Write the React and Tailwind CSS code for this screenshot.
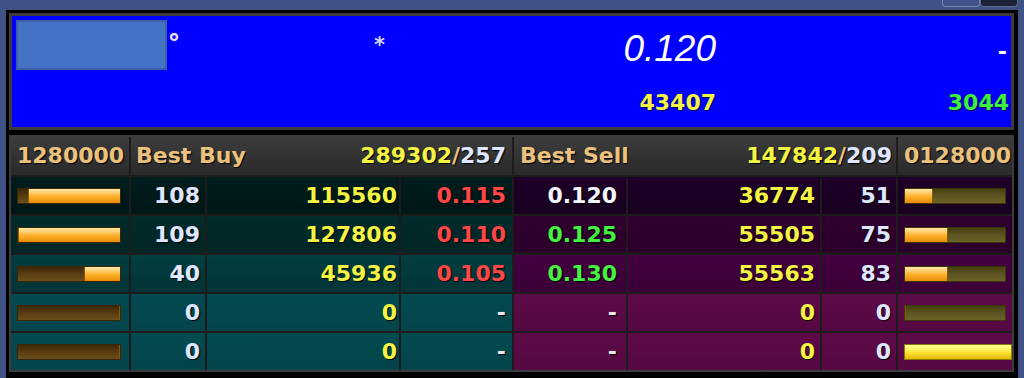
const buyRows = [
  { bar: 90, count: 108, qty: 115560, price: "0.115" },
  { bar: 100, count: 109, qty: 127806, price: "0.110" },
  { bar: 35, count: 40, qty: 45936, price: "0.105" },
  { bar: 0, count: 0, qty: 0, price: "-" },
  { bar: 0, count: 0, qty: 0, price: "-" },
]

const sellRows = [
  { price: "0.120", priceClass: "text-[#f4f6ff]", qty: 36774, count: 51, bar: 28 },
  { price: "0.125", priceClass: "text-[#44f044]", qty: 55505, count: 75, bar: 43 },
  { price: "0.130", priceClass: "text-[#44f044]", qty: 55563, count: 83, bar: 43 },
  { price: "-", priceClass: "text-[#e8e8f0]", qty: 0, count: 0, bar: 0 },
  { price: "-", priceClass: "text-[#e8e8f0]", qty: 0, count: 0, bar: 0, full: true },
]

const buyBg = [
  "bg-linear-to-b from-[#011d1d] to-[#011616]",
  "bg-linear-to-b from-[#032c2c] to-[#022525]",
  "bg-linear-to-b from-[#033e41] to-[#023437]",
  "bg-linear-to-b from-[#044b51] to-[#03444a]",
  "bg-linear-to-b from-[#044b51] to-[#03444a]",
]

const sellBg = [
  "bg-linear-to-b from-[#1f0028] to-[#180020]",
  "bg-linear-to-b from-[#31002f] to-[#2a0029]",
  "bg-linear-to-b from-[#43003f] to-[#3b0038]",
  "bg-linear-to-b from-[#5d0b48] to-[#560842]",
  "bg-linear-to-b from-[#5d0b48] to-[#560842]",
]

const shadow = "[text-shadow:1px_1px_1px_#000]"

const BuyBar = ({ pct }) => (
  <div className="w-[104px] h-[16px] flex justify-end border border-[#3a2505] bg-linear-to-b from-[#3d2806] via-[#5a3c12] to-[#6b4e1c]">
    <div
      className="h-full bg-linear-to-b from-[#ffe9a8] via-[#ffb52e] to-[#e98a00] border-l border-[#8a5a00]"
      style={{ width: `${pct}%` }}
    />
  </div>
)

const SellBar = ({ pct, full }) => {
  if (full) {
    return (
      <div className="flex-1 h-[16px] border border-[#8a7a00] bg-linear-to-b from-[#ffff9c] via-[#ffe633] to-[#e6b800]" />
    )
  }
  return (
    <div className="w-[102px] h-[16px] flex border border-[#3a3608] bg-linear-to-b from-[#45400f] via-[#5c5421] to-[#6b6228]">
      <div
        className="h-full bg-linear-to-b from-[#ffe9a8] via-[#ffb52e] to-[#e98a00] border-r border-[#8a5a00]"
        style={{ width: `${pct}%` }}
      />
    </div>
  )
}

const App = () => {
  return (
    <div className="w-[1024px] h-[378px] overflow-hidden bg-[#3f5185] flex flex-col font-['DejaVu_Sans',sans-serif] font-bold text-[22px] leading-none">
      {/* window tabs */}
      <div className="h-[10px] flex justify-end pr-[6px]">
        <div className="w-[38px] h-[7px] border border-t-0 border-[#7888b0] rounded-b-[4px]" />
        <div className="w-[38px] h-[7px] bg-[#1c2236] border border-t-0 border-[#5a6a94] rounded-b-[4px]" />
      </div>

      <div className="mx-[6px] flex-1 bg-black pl-[3px] pr-[4px] pt-[3px] flex flex-col gap-[5px]">
        {/* quote panel */}
        <div className="h-[117px] border-[3px] border-[#3c3c3c] bg-[#0000fe] grid grid-cols-[360px_344px_1fr] grid-rows-[72px_1fr]">
          <div className="flex items-start pl-[4px] pt-[4px]">
            <div className="w-[151px] h-[50px] bg-[#4472c4] border-2 border-[#3b5fa6]" />
            <span className="ml-[1px] mt-[12px] text-[24px] text-[#e4e0ff] [text-shadow:0_0_1px_#c080ff]">°</span>
          </div>
          <div className="flex justify-between items-start">
            <span className="pl-[2px] pt-[19px] text-[21px] text-[#d4d4ff]">*</span>
            <span className="pt-[14px] font-['Liberation_Sans',sans-serif] font-normal italic text-[37px] text-white">
              0.120
            </span>
          </div>
          <div className="flex justify-end items-start pr-[4px] pt-[25px]">
            <span className="text-white">-</span>
          </div>
          <div />
          <div className="flex justify-end items-start pt-[4px]">
            <span className="text-[#f4f444] [text-shadow:1px_1px_1px_#000060]">43407</span>
          </div>
          <div className="flex justify-end items-start pt-[4px] pr-[2px]">
            <span className="text-[#3cf03c] [text-shadow:1px_1px_1px_#000060]">3044</span>
          </div>
        </div>

        {/* depth table */}
        <div className="border-2 border-[#3c3c3c] bg-[#1c1c1c] grid grid-cols-[118px_74px_192px_111px_112px_192px_74px_114px] auto-rows-[37px] grid-rows-[38px] gap-[2px]">
          <div className={`flex items-center pl-[6px] bg-linear-to-b from-[#3c3c3c] to-[#2a2a2a] text-[#eac27e] ${shadow}`}>
            1280000
          </div>
          <div className={`col-span-3 flex items-center justify-between pl-[5px] pr-[6px] bg-linear-to-b from-[#3c3c3c] to-[#2a2a2a] ${shadow}`}>
            <span className="text-[#eac27e]">Best Buy</span>
            <span>
              <span className="text-[#f4f444]">289302</span>
              <span className="text-[#eac27e]">/</span>
              <span className="text-[#dfe6ff]">257</span>
            </span>
          </div>
          <div className={`col-span-3 flex items-center justify-between pl-[6px] pr-[4px] bg-linear-to-b from-[#3c3c3c] to-[#2a2a2a] ${shadow}`}>
            <span className="text-[#eac27e]">Best Sell</span>
            <span>
              <span className="text-[#f4f444]">147842</span>
              <span className="text-[#eac27e]">/</span>
              <span className="text-[#dfe6ff]">209</span>
            </span>
          </div>
          <div className={`flex items-center pl-[6px] bg-linear-to-b from-[#3c3c3c] to-[#2a2a2a] text-[#eac27e] ${shadow}`}>
            0128000
          </div>

          {buyRows.map((b, i) => {
            const s = sellRows[i]
            return [
              <div key={`b1-${i}`} className={`flex items-center pl-[6px] ${buyBg[i]}`}>
                <BuyBar pct={b.bar} />
              </div>,
              <div key={`b2-${i}`} className={`flex items-center justify-end pr-[5px] text-[#dfe6ff] ${shadow} ${buyBg[i]}`}>
                {b.count}
              </div>,
              <div key={`b3-${i}`} className={`flex items-center justify-end pr-[2px] text-[#f4f444] ${shadow} ${buyBg[i]}`}>
                {b.qty}
              </div>,
              <div key={`b4-${i}`} className={`flex items-center justify-end pr-[6px] ${b.price === "-" ? "text-[#e8e8f0]" : "text-[#ff4646]"} ${shadow} ${buyBg[i]}`}>
                {b.price}
              </div>,
              <div key={`s1-${i}`} className={`flex items-center justify-end pr-[9px] ${s.priceClass} ${shadow} ${sellBg[i]}`}>
                {s.price}
              </div>,
              <div key={`s2-${i}`} className={`flex items-center justify-end pr-[5px] text-[#f4f444] ${shadow} ${sellBg[i]}`}>
                {s.qty}
              </div>,
              <div key={`s3-${i}`} className={`flex items-center justify-end pr-[5px] text-[#dfe6ff] ${shadow} ${sellBg[i]}`}>
                {s.count}
              </div>,
              <div key={`s4-${i}`} className={`flex items-center pl-[6px] ${s.full ? "" : "pr-[6px]"} ${sellBg[i]}`}>
                <SellBar pct={s.bar} full={s.full} />
              </div>,
            ]
          })}
        </div>
      </div>
    </div>
  )
}

export default App
